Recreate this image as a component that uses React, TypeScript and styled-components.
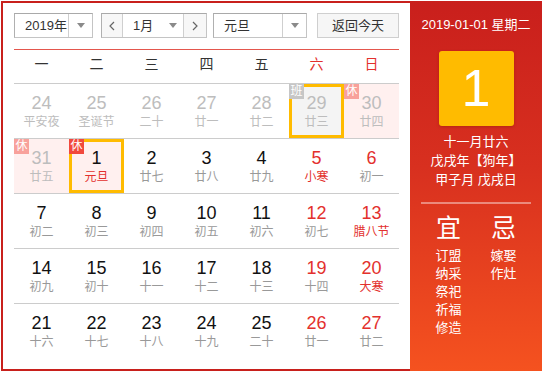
import React from 'react'
import styled, { createGlobalStyle, css } from 'styled-components'

const GlobalStyle = createGlobalStyle`
  html, body {
    margin: 0;
    padding: 0;
    background: #fff;
  }
  body {
    font-family: 'Liberation Sans', 'Noto Sans CJK SC', sans-serif;
    color: #333;
  }
`

type Tone = 'other' | 'normal'
type Mark = 'rest' | 'work'

interface DayData {
  day: number
  lunar: string
  tone?: Tone
  weekend?: boolean
  festival?: boolean
  mark?: Mark
  selected?: boolean
}

const weeks: DayData[][] = [
  [
    { day: 24, lunar: '平安夜', tone: 'other' },
    { day: 25, lunar: '圣诞节', tone: 'other' },
    { day: 26, lunar: '二十', tone: 'other' },
    { day: 27, lunar: '廿一', tone: 'other' },
    { day: 28, lunar: '廿二', tone: 'other' },
    { day: 29, lunar: '廿三', tone: 'other', mark: 'work', selected: true },
    { day: 30, lunar: '廿四', tone: 'other', mark: 'rest' },
  ],
  [
    { day: 31, lunar: '廿五', tone: 'other', mark: 'rest' },
    { day: 1, lunar: '元旦', festival: true, mark: 'rest', selected: true },
    { day: 2, lunar: '廿七' },
    { day: 3, lunar: '廿八' },
    { day: 4, lunar: '廿九' },
    { day: 5, lunar: '小寒', weekend: true, festival: true },
    { day: 6, lunar: '初一', weekend: true },
  ],
  [
    { day: 7, lunar: '初二' },
    { day: 8, lunar: '初三' },
    { day: 9, lunar: '初四' },
    { day: 10, lunar: '初五' },
    { day: 11, lunar: '初六' },
    { day: 12, lunar: '初七', weekend: true },
    { day: 13, lunar: '腊八节', weekend: true, festival: true },
  ],
  [
    { day: 14, lunar: '初九' },
    { day: 15, lunar: '初十' },
    { day: 16, lunar: '十一' },
    { day: 17, lunar: '十二' },
    { day: 18, lunar: '十三' },
    { day: 19, lunar: '十四', weekend: true },
    { day: 20, lunar: '大寒', weekend: true, festival: true },
  ],
  [
    { day: 21, lunar: '十六' },
    { day: 22, lunar: '十七' },
    { day: 23, lunar: '十八' },
    { day: 24, lunar: '十九' },
    { day: 25, lunar: '二十' },
    { day: 26, lunar: '廿一', weekend: true },
    { day: 27, lunar: '廿二', weekend: true },
  ],
]

const weekdays = ['一', '二', '三', '四', '五', '六', '日']

const Frame = styled.div`
  display: flex;
  width: 541px;
  height: 370px;
  margin: 1px 0 0 1px;
`

const Main = styled.div`
  box-sizing: border-box;
  width: 409px;
  height: 100%;
  border: 2px solid #c8201c;
  border-right: 0;
  padding: 10px 11px 0 11px;
`

// toolbar with selects
const Toolbar = styled.div`
  display: flex;
  height: 25px;
  font-size: 13px;
  color: #333;
`

const Select = styled.div<{ $width: number; $after: number }>`
  box-sizing: border-box;
  display: flex;
  width: ${(p) => p.$width}px;
  height: 25px;
  margin-right: ${(p) => p.$after}px;
  border: 1px solid #c4c4c4;
  border-top-color: #a9a9a9;
  border-left-color: #b0b0b0;
  background: #fff;
`

const SelectText = styled.div`
  flex: 1;
  padding-left: 10px;
  line-height: 23px;
  white-space: nowrap;
`

const ArrowBox = styled.div<{ $divided?: boolean }>`
  display: flex;
  align-items: center;
  justify-content: center;
  width: ${(p) => (p.$divided ? 23 : 20)}px;
  border-left: ${(p) => (p.$divided ? '1px solid #cfcfcf' : '0')};
`

const Caret = styled.span`
  width: 0;
  height: 0;
  border-left: 4px solid transparent;
  border-right: 4px solid transparent;
  border-top: 5px solid #8a8a8a;
`

const NavButton = styled.div<{ $side: 'left' | 'right' }>`
  display: flex;
  align-items: center;
  justify-content: center;
  width: ${(p) => (p.$side === 'left' ? 20 : 22)}px;
  background: #f7f7f7;
  ${(p) =>
    p.$side === 'left'
      ? css`border-right: 1px solid #cfcfcf;`
      : css`border-left: 1px solid #cfcfcf;`}
`

const TodayButton = styled.div`
  box-sizing: border-box;
  flex: 1;
  height: 25px;
  line-height: 23px;
  text-align: center;
  border: 1px solid #cfcfcf;
  background: #f6f6f6;
  color: #333;
`

const RedRule = styled.div`
  height: 1px;
  margin-top: 11px;
  background: #e4564d;
`

const WeekHeader = styled.div`
  display: grid;
  grid-template-columns: repeat(7, 55px);
  height: 33px;
  border-bottom: 1px solid #cccccc;
`

const WeekdayName = styled.div<{ $weekend?: boolean }>`
  text-align: center;
  font-size: 14px;
  line-height: 28px;
  color: ${(p) => (p.$weekend ? '#e3302d' : '#333')};
`

const WeekRow = styled.div`
  display: grid;
  grid-template-columns: repeat(7, 55px);
  height: 55px;
  box-sizing: border-box;
  border-bottom: 1px solid #cccccc;

  &:last-child {
    border-bottom: 0;
  }
`

const cellBg = (mark?: Mark) => {
  if (mark === 'rest') return '#fff0ef'
  if (mark === 'work') return '#f4f4f4'
  return 'transparent'
}

const Cell = styled.div<{ $mark?: Mark; $selected?: boolean }>`
  position: relative;
  box-sizing: border-box;
  height: 54px;
  padding-top: 10px;
  text-align: center;
  background: ${(p) => cellBg(p.$mark)};
  box-shadow: ${(p) => (p.$selected ? 'inset 0 0 0 3px #ffbb00' : 'none')};
`

const DayNumber = styled.div<{ $tone: Tone; $weekend?: boolean }>`
  font-size: 18px;
  line-height: 19px;
  color: ${(p) => (p.$tone === 'other' ? '#bdbdbd' : p.$weekend ? '#e3302d' : '#111')};
`

const LunarText = styled.div<{ $tone: Tone; $festival?: boolean }>`
  font-size: 12px;
  line-height: 18px;
  color: ${(p) => (p.$tone === 'other' ? '#bdbdbd' : p.$festival ? '#e3302d' : '#999')};
`

const Badge = styled.span<{ $mark: Mark; $tone: Tone }>`
  position: absolute;
  top: 0;
  left: 0;
  width: 15px;
  height: 15px;
  font-size: 12px;
  line-height: 15px;
  text-align: center;
  color: #fff;
  background: ${(p) =>
    p.$mark === 'work' ? '#c6c6c6' : p.$tone === 'other' ? '#f8a19b' : '#f1493d'};
`

// right side panel
const Panel = styled.div`
  flex: 1;
  display: flex;
  flex-direction: column;
  align-items: center;
  color: #fff;
  background: linear-gradient(180deg, #c91f1c 0%, #d8301f 45%, #f5521f 100%);
  text-align: center;
`

const DateLine = styled.div`
  margin-top: 14px;
  font-size: 13px;
  line-height: 20px;
  white-space: nowrap;
`

const BigDay = styled.div`
  width: 75px;
  height: 75px;
  margin-top: 16px;
  border-radius: 3px;
  background: #ffbb00;
  box-shadow: 0 1px 3px rgba(120, 20, 0, 0.35);
  font-size: 52px;
  line-height: 75px;
`

const LunarInfo = styled.div`
  margin-top: 6px;
  font-size: 13px;
  line-height: 19px;
  white-space: nowrap;
`

const PanelRule = styled.div`
  width: 110px;
  height: 2px;
  margin-top: 13px;
  background: rgba(255, 255, 255, 0.42);
`

const Almanac = styled.div`
  display: flex;
  width: 110px;
  margin-top: 9px;
`

const AlmanacColumn = styled.div`
  flex: 1;
  display: flex;
  flex-direction: column;
  align-items: center;
`

const AlmanacHead = styled.div`
  font-size: 25px;
  line-height: 30px;
`

const AlmanacItems = styled.div`
  margin-top: 4px;
  font-size: 13px;
  line-height: 18px;
`

function Chevron({ dir }: { dir: 'left' | 'right' }) {
  const pts = dir === 'left' ? '5,1 1,5 5,9' : '1,1 5,5 1,9'
  return (
    <svg width="6" height="10" viewBox="0 0 6 10">
      <polyline points={pts} fill="none" stroke="#666" strokeWidth="1.2" />
    </svg>
  )
}

function DayCell({ data }: { data: DayData }) {
  const tone = data.tone ?? 'normal'
  return (
    <Cell $mark={data.mark} $selected={data.selected}>
      {data.mark && (
        <Badge $mark={data.mark} $tone={tone}>
          {data.mark === 'rest' ? '休' : '班'}
        </Badge>
      )}
      <DayNumber $tone={tone} $weekend={data.weekend}>
        {data.day}
      </DayNumber>
      <LunarText $tone={tone} $festival={data.festival}>
        {data.lunar}
      </LunarText>
    </Cell>
  )
}

export default function App() {
  return (
    <>
      <GlobalStyle />
      <Frame>
        <Main>
          <Toolbar>
            <Select $width={79} $after={8}>
              <SelectText>2019年</SelectText>
              <ArrowBox $divided>
                <Caret />
              </ArrowBox>
            </Select>
            <Select $width={106} $after={6}>
              <NavButton $side="left">
                <Chevron dir="left" />
              </NavButton>
              <SelectText>1月</SelectText>
              <ArrowBox>
                <Caret />
              </ArrowBox>
              <NavButton $side="right">
                <Chevron dir="right" />
              </NavButton>
            </Select>
            <Select $width={94} $after={10}>
              <SelectText>元旦</SelectText>
              <ArrowBox $divided>
                <Caret />
              </ArrowBox>
            </Select>
            <TodayButton>返回今天</TodayButton>
          </Toolbar>
          <RedRule />
          <WeekHeader>
            {weekdays.map((w, i) => (
              <WeekdayName key={w} $weekend={i >= 5}>
                {w}
              </WeekdayName>
            ))}
          </WeekHeader>
          {weeks.map((week, i) => (
            <WeekRow key={i}>
              {week.map((d) => (
                <DayCell key={`${i}-${d.day}`} data={d} />
              ))}
            </WeekRow>
          ))}
        </Main>
        <Panel>
          <DateLine>2019-01-01 星期二</DateLine>
          <BigDay>1</BigDay>
          <LunarInfo>
            <div>十一月廿六</div>
            <div>戊戌年【狗年】</div>
            <div>甲子月 戊戌日</div>
          </LunarInfo>
          <PanelRule />
          <Almanac>
            <AlmanacColumn>
              <AlmanacHead>宜</AlmanacHead>
              <AlmanacItems>
                <div>订盟</div>
                <div>纳采</div>
                <div>祭祀</div>
                <div>祈福</div>
                <div>修造</div>
              </AlmanacItems>
            </AlmanacColumn>
            <AlmanacColumn>
              <AlmanacHead>忌</AlmanacHead>
              <AlmanacItems>
                <div>嫁娶</div>
                <div>作灶</div>
              </AlmanacItems>
            </AlmanacColumn>
          </Almanac>
        </Panel>
      </Frame>
    </>
  )
}
